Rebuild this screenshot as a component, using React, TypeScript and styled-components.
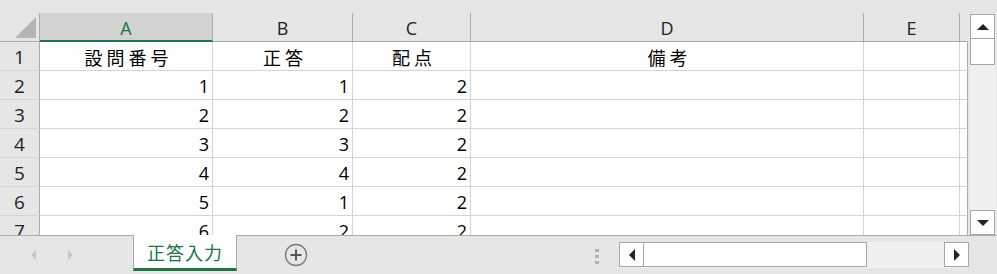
import React from "react";
import styled, { createGlobalStyle } from "styled-components";

const GlobalStyle = createGlobalStyle`
  html, body {
    margin: 0;
    padding: 0;
    background: #e6e6e6;
    overflow: hidden;
  }
  * { box-sizing: border-box; }
`;

const GREEN = "#217346";
const JP = `"Noto Sans CJK JP", "Noto Sans", sans-serif`;
const LATIN = `"Open Sans", "Liberation Sans", sans-serif`;

const COLS = [
  { key: "A", width: 173 },
  { key: "B", width: 140 },
  { key: "C", width: 118 },
  { key: "D", width: 393 },
  { key: "E", width: 96 },
  { key: "", width: 8 },
];

const rows: [number, string | number, string | number, string | number][] = [
  [1, "設問番号", "正答", "配点"],
  [2, 1, 1, 2],
  [3, 2, 2, 2],
  [4, 3, 3, 2],
  [5, 4, 4, 2],
  [6, 5, 1, 2],
  [7, 6, 2, 2],
];

const Window = styled.div`
  width: 997px;
  height: 274px;
  display: flex;
  flex-direction: column;
  background: #e6e6e6;
  overflow: hidden;
`;

const TopStrip = styled.div`
  height: 13px;
  flex: none;
`;

const Main = styled.div`
  height: 222px;
  flex: none;
  display: flex;
`;

const Sheet = styled.div`
  width: 968px;
  height: 222px;
  overflow: hidden;
  display: grid;
  grid-template-columns: 40px ${COLS.map((c) => `${c.width}px`).join(" ")};
  grid-auto-rows: 29px;
  grid-template-rows: 29px;
  align-content: start;
  background: #fff;
`;

const Corner = styled.div`
  position: relative;
  background: #e6e6e6;
  border-right: 1px solid #ababab;
  border-bottom: 1px solid #ababab;
  &::after {
    content: "";
    position: absolute;
    right: 3px;
    bottom: 3px;
    width: 0;
    height: 0;
    border-left: 21px solid transparent;
    border-bottom: 21px solid #b4b4b4;
  }
`;

const ColHead = styled.div<{ $selected?: boolean; $last?: boolean }>`
  background: ${(p) => (p.$selected ? "#d2d2d2" : "#e6e6e6")};
  border-right: 1px solid ${(p) => (p.$last ? "#e6e6e6" : "#ababab")};
  border-bottom: ${(p) => (p.$selected ? `2px solid ${GREEN}` : "1px solid #ababab")};
  color: ${(p) => (p.$selected ? GREEN : "#222")};
  font-family: ${LATIN};
  font-size: 18px;
  display: flex;
  align-items: center;
  justify-content: center;
  padding-top: ${(p) => (p.$selected ? "2px" : "1px")};
`;

const RowHead = styled.div`
  background: #e6e6e6;
  border-right: 1px solid #ababab;
  border-bottom: 1px solid #d4d4d4;
  color: #222;
  font-family: ${LATIN};
  font-size: 19px;
  display: flex;
  align-items: center;
  justify-content: center;
  padding-top: 1px;
`;

const Cell = styled.div<{ $align: "left" | "right" | "center"; $last?: boolean }>`
  border-right: 1px solid ${(p) => (p.$last ? "#ababab" : "#d4d4d4")};
  border-bottom: 1px solid #d4d4d4;
  color: #000;
  font-family: ${JP};
  font-size: 18px;
  display: flex;
  align-items: center;
  justify-content: ${(p) =>
    p.$align === "right" ? "flex-end" : p.$align === "center" ? "center" : "flex-start"};
  padding: 1px 3px 0 4px;
  white-space: nowrap;
  overflow: hidden;
`;

const Num = styled.span`
  font-family: ${LATIN};
  font-size: 18px;
`;

const Head = styled.span`
  letter-spacing: 4px;
  margin-right: -4px;
`;

const VScroll = styled.div`
  width: 29px;
  display: flex;
  flex-direction: column;
  padding: 1px 1px 0 2px;
  background: #e6e6e6;
`;

const VTrack = styled.div`
  flex: 1;
  background: #f0f0f0;
  display: flex;
  flex-direction: column;
`;

const ScrollBtn = styled.div`
  width: 25px;
  height: 25px;
  flex: none;
  background: #fff;
  border: 1px solid #a6a6a6;
  display: flex;
  align-items: center;
  justify-content: center;
`;

const VThumb = styled.div`
  width: 25px;
  height: 26px;
  background: #fff;
  border: 1px solid #a6a6a6;
  border-top: none;
`;

const Spacer = styled.div`
  flex: 1;
`;

const Arrow = styled.div<{ $dir: "up" | "down" | "left" | "right" }>`
  width: 0;
  height: 0;
  ${(p) =>
    p.$dir === "up"
      ? "border-left: 6px solid transparent; border-right: 6px solid transparent; border-bottom: 6px solid #222;"
      : p.$dir === "down"
      ? "border-left: 6px solid transparent; border-right: 6px solid transparent; border-top: 6px solid #222;"
      : p.$dir === "left"
      ? "border-top: 6px solid transparent; border-bottom: 6px solid transparent; border-right: 6px solid #222;"
      : "border-top: 6px solid transparent; border-bottom: 6px solid transparent; border-left: 6px solid #222;"}
`;

const TabBar = styled.div`
  height: 39px;
  flex: none;
  display: flex;
  align-items: flex-start;
  background: #e6e6e6;
  border-top: 1px solid #ababab;
`;

const NavArrows = styled.div`
  width: 133px;
  height: 38px;
  display: flex;
  align-items: center;
  padding-left: 31px;
  gap: 32px;
`;

const NavArrow = styled.div<{ $dir: "left" | "right" }>`
  width: 0;
  height: 0;
  border-top: 5px solid transparent;
  border-bottom: 5px solid transparent;
  ${(p) =>
    p.$dir === "left"
      ? "border-right: 5px solid #c6c6c6;"
      : "border-left: 5px solid #c6c6c6;"}
`;

const Tab = styled.div`
  width: 104px;
  height: 36px;
  margin-top: -1px;
  background: #fff;
  border-left: 1px solid #ababab;
  border-right: 1px solid #ababab;
  border-bottom: 3px solid ${GREEN};
  color: ${GREEN};
  font-family: ${JP};
  font-size: 18px;
  display: flex;
  align-items: center;
  justify-content: center;
  letter-spacing: 1px;
  padding-top: 1px;
`;

const AddSheet = styled.div`
  width: 116px;
  height: 38px;
  display: flex;
  align-items: center;
  justify-content: center;
  padding-left: 2px;
`;

const Dots = styled.div`
  width: 4px;
  margin-left: 242px;
  margin-top: 13px;
  display: flex;
  flex-direction: column;
  gap: 3px;
  & > span {
    width: 4px;
    height: 3px;
    background: #b0b0b0;
  }
`;

const HScroll = styled.div`
  margin-left: 20px;
  margin-top: 6px;
  width: 350px;
  height: 26px;
  display: flex;
  background: #f0f0f0;
`;

const HThumb = styled.div`
  width: 223px;
  height: 25px;
  background: #fff;
  border: 1px solid #a6a6a6;
  border-left: none;
`;

export default function App() {
  return (
    <>
      <GlobalStyle />
      <Window>
        <TopStrip />
        <Main>
          <Sheet>
            <Corner />
            {COLS.map((c, i) => (
              <ColHead key={i} $selected={c.key === "A"} $last={i === COLS.length - 1}>
                {c.key}
              </ColHead>
            ))}
            {rows.map(([n, a, b, c]) => (
              <React.Fragment key={n}>
                <RowHead>{n}</RowHead>
                {n === 1 ? (
                  <>
                    <Cell $align="center"><Head>{a}</Head></Cell>
                    <Cell $align="center"><Head>{b}</Head></Cell>
                    <Cell $align="center"><Head>{c}</Head></Cell>
                    <Cell $align="center"><Head>備考</Head></Cell>
                  </>
                ) : (
                  <>
                    <Cell $align="right"><Num>{a}</Num></Cell>
                    <Cell $align="right"><Num>{b}</Num></Cell>
                    <Cell $align="right"><Num>{c}</Num></Cell>
                    <Cell $align="left" />
                  </>
                )}
                <Cell $align="left" />
                <Cell $align="left" $last />
              </React.Fragment>
            ))}
          </Sheet>
          <VScroll>
            <VTrack>
              <ScrollBtn><Arrow $dir="up" /></ScrollBtn>
              <VThumb />
              <Spacer />
              <ScrollBtn><Arrow $dir="down" /></ScrollBtn>
            </VTrack>
          </VScroll>
        </Main>
        <TabBar>
          <NavArrows>
            <NavArrow $dir="left" />
            <NavArrow $dir="right" />
          </NavArrows>
          <Tab>正答入力</Tab>
          <AddSheet>
            <svg width="24" height="24" viewBox="0 0 24 24">
              <circle cx="12" cy="12" r="10.5" fill="none" stroke="#7a7a7a" strokeWidth="1.3" />
              <path d="M12 6.5v11M6.5 12h11" stroke="#555" strokeWidth="2" />
            </svg>
          </AddSheet>
          <Dots>
            <span />
            <span />
            <span />
          </Dots>
          <HScroll>
            <ScrollBtn><Arrow $dir="left" /></ScrollBtn>
            <HThumb />
            <Spacer />
            <ScrollBtn><Arrow $dir="right" /></ScrollBtn>
          </HScroll>
        </TabBar>
      </Window>
    </>
  );
}
